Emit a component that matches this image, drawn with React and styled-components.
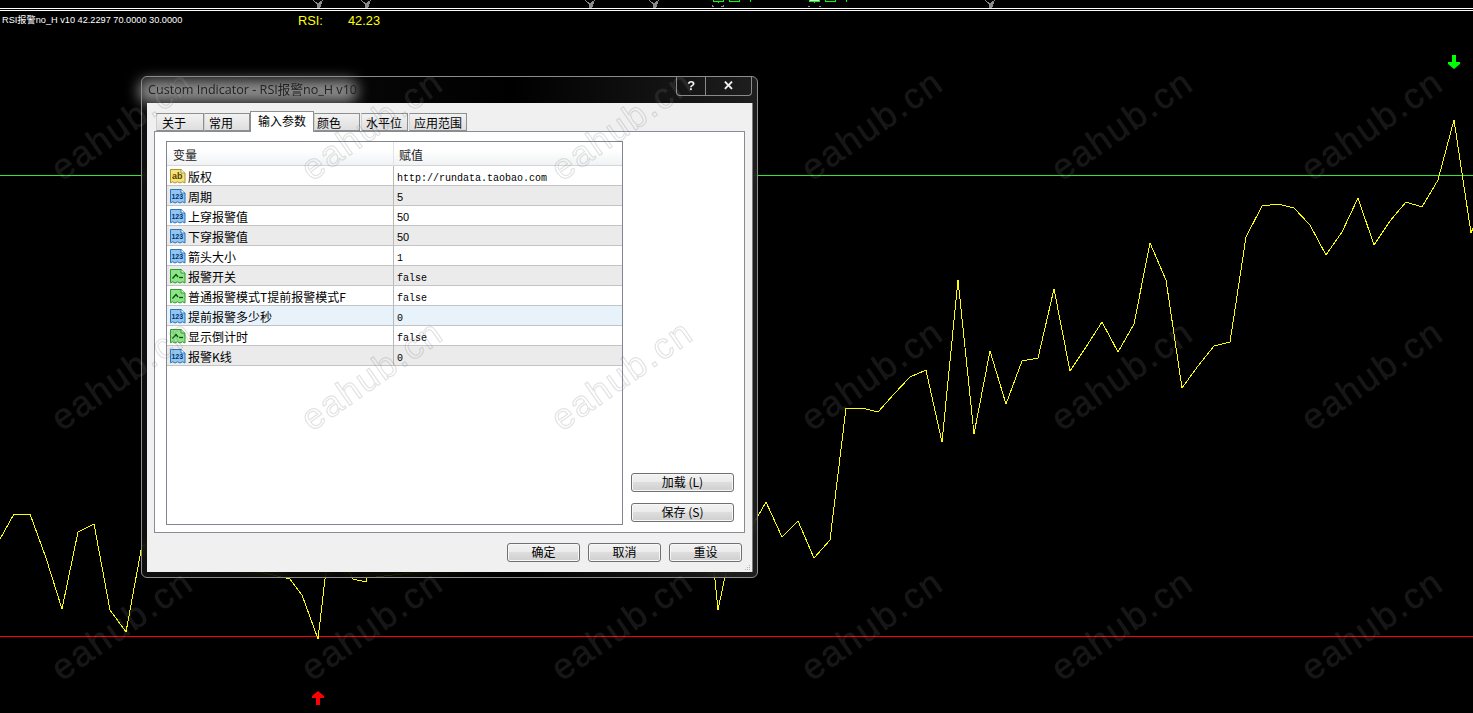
import React from 'react';
import styled, {createGlobalStyle} from 'styled-components';

const GlobalStyle = createGlobalStyle`
    html, body {
        margin: 0;
        padding: 0;
        background: #000;
        overflow: hidden;
    }
`;

const cjk = `"Noto Sans CJK SC", "Liberation Sans", sans-serif`;

const Page = styled.div`
    position: relative;
    width: 1473px;
    height: 713px;
    background: #000;
    overflow: hidden;
    font-family: ${cjk};
`;

const ChartSvg = styled.svg`
    position: absolute;
    left: 0;
    top: 0;
`;

const ChartHeader = styled.div`
    position: absolute;
    left: 2px;
    top: 14px;
    display: flex;
    align-items: center;
    height: 13px;
`;

const ChartLabel = styled.span`
    width: 296px;
    color: #fff;
    font: 9.2px/13px "Liberation Sans", ${cjk};
`;

const RsiName = styled.span`
    width: 50px;
    color: #ffff00;
    font: 12.8px/13px "Liberation Sans", sans-serif;
`;

const RsiValue = styled.span`
    color: #ffff00;
    font: 12.8px/13px "Liberation Sans", sans-serif;
`;

// aero 窗口，玻璃边框会把后面的线条模糊
const Dialog = styled.div`
    position: absolute;
    left: 141px;
    top: 76px;
    width: 617px;
    height: 502px;
    box-sizing: border-box;
    border: 1px solid #8c8c8c;
    border-radius: 6px;
    background: linear-gradient(90deg, rgba(20,20,20,.75), rgba(0,0,0,.75) 60%, rgba(40,40,40,.75));
    backdrop-filter: blur(4px);
    display: flex;
    flex-direction: column;
    padding: 0 4px 5px 5px;
`;

const TitleBar = styled.div`
    position: relative;
    height: 26px;
    flex: none;
    display: flex;
    align-items: center;
    justify-content: space-between;
`;

const TitleGlow = styled.div`
    position: absolute;
    left: -8px;
    top: 3px;
    width: 218px;
    height: 22px;
    background: #8e8e8e;
    filter: blur(7px);
    border-radius: 8px;
`;

const TitleText = styled.div`
    position: relative;
    margin: -1px 0 0 1px;
    color: #222;
    font: 12.6px/16px "Open Sans", ${cjk};
    white-space: nowrap;
`;

const CaptionButtons = styled.div`
    align-self: flex-start;
    display: flex;
    width: 76px;
    height: 19px;
    margin-right: 1px;
    box-sizing: border-box;
    border: 1px solid #8a8a8a;
    border-top: none;
    border-radius: 0 0 4px 4px;
`;

const CaptionButton = styled.div`
    width: ${props => props.wide ? '47px' : '29px'};
    box-sizing: border-box;
    text-align: center;
    color: #f0f0f0;
    font: bold 13px/17px "Liberation Sans", sans-serif;
    border-left: ${props => props.wide ? '1px solid #8a8a8a' : 'none'};
`;

const Client = styled.div`
    flex: 1;
    background: #f0f0f0;
    border-right: 1px solid #7a7a7a;
    display: flex;
    flex-direction: column;
    padding: 8px 7px 0 7px;
    position: relative;
`;

const TabStrip = styled.div`
    height: 20px;
    display: flex;
    align-items: flex-end;
    padding-left: 2px;
    position: relative;
    z-index: 1;
`;

const Tab = styled.div`
    box-sizing: border-box;
    width: ${props => props.w}px;
    height: ${props => props.active ? 21 : 18}px;
    margin-bottom: ${props => props.active ? -1 : 0}px;
    margin-right: ${props => props.gap || 0}px;
    padding-left: ${props => props.pad}px;
    border: 1px solid #8e8f8f;
    border-bottom: ${props => props.active ? 'none' : '1px solid #8e8f8f'};
    border-left-color: ${props => props.active ? '#8e8f8f' : '#d0d0d0'};
    background: ${props => props.active ? '#fff' : 'linear-gradient(#f2f2f2, #dedede)'};
    color: #000;
    font-size: 12px;
    line-height: ${props => props.active ? 18 : 17}px;
    white-space: nowrap;
`;

const TabPanel = styled.div`
    height: 402px;
    box-sizing: border-box;
    border: 1px solid #898c95;
    background: #fff;
    display: flex;
    gap: 8px;
    padding: 9px 0 0 11px;
`;

const ParamTable = styled.div`
    width: 457px;
    height: 384px;
    box-sizing: border-box;
    border: 1px solid #82878f;
    background: #fff;
    flex: none;
`;

const TableHeader = styled.div`
    height: 24px;
    box-sizing: border-box;
    display: grid;
    grid-template-columns: 227px 1fr;
    background: linear-gradient(#fff 35%, #f0f2f4);
    border-bottom: 1px solid #d5d5d5;
    font-size: 12px;
    line-height: 26px;
    color: #222;
`;

const HeaderCell = styled.div`
    padding-left: ${props => props.first ? 6 : 5}px;
    border-right: ${props => props.first ? '1px solid #e2e3e5' : 'none'};
`;

const Row = styled.div`
    height: 20px;
    box-sizing: border-box;
    display: grid;
    grid-template-columns: 227px 1fr;
    grid-template-rows: 19px;
    background: ${props => props.selected ? '#e8f2fb' : props.odd ? '#ebebeb' : '#fff'};
    border-bottom: 1px solid #c4c4c4;
`;

const NameCell = styled.div`
    box-sizing: border-box;
    display: flex;
    align-items: center;
    gap: 2px;
    padding: 1px 0 0 2px;
    border-right: 1px solid #b9b9b9;
    font-size: 12px;
    line-height: 17px;
    color: #000;
    white-space: nowrap;
`;

const ValueCell = styled.div`
    box-sizing: border-box;
    padding: ${props => props.mono ? 3 : 2}px 0 0 3px;
    color: #000;
    font: ${props => props.mono ? '10px/19px "Liberation Mono", monospace' : '11px/18px "Liberation Sans", sans-serif'};
`;

const IconSvg = styled.svg`
    flex: none;
`;

const SideButtons = styled.div`
    width: 103px;
    height: 381px;
    display: flex;
    flex-direction: column;
    justify-content: flex-end;
    gap: 11px;
`;

const Button = styled.div`
    box-sizing: border-box;
    width: ${props => props.w}px;
    height: 19px;
    flex: none;
    border: 1px solid #707070;
    border-radius: 3px;
    background: linear-gradient(#f2f2f2 0, #ebebeb 48%, #dddddd 50%, #cfcfcf 100%);
    box-shadow: inset 0 0 0 1px #f8f8f8;
    text-align: center;
    color: #000;
    font-size: 12px;
    line-height: 15px;
`;

const Footer = styled.div`
    display: flex;
    justify-content: flex-end;
    gap: 8px;
    padding: 10px 3px 0 0;
`;

const Grip = styled.svg`
    position: absolute;
    right: 1px;
    bottom: 1px;
`;

// 水印盖在最上面，白底上只看得到描边
const WatermarkLayer = styled.div`
    position: absolute;
    left: -3px;
    top: 0;
    display: grid;
    grid-template-columns: repeat(6, 250px);
    grid-auto-rows: 250px;
    pointer-events: none;
`;

const Watermark = styled.div`
    display: flex;
    align-items: center;
    justify-content: center;
    transform: rotate(-35deg);
    color: rgba(255, 255, 255, 0.085);
    -webkit-text-stroke: 1.2px rgba(60, 60, 60, 0.15);
    font: 36px/1 "Liberation Sans", sans-serif;
    letter-spacing: 2px;
    white-space: nowrap;
`;

const linePoints = [
    [0,539],[14,514],[30,514],[46,558],[62,609],[78,532],[94,524],[110,610],[126,632],[142,545],
    [290,579],[302,595],[318,639],[325,579],[332,540],
    [353,579],[366,582],[367,578],
    [700,540],[714,570],[718,610],[726,572],[740,540],
    [750,530],[766,502],[782,537],[798,521],[814,558],[830,540],[846,408],[862,408],[878,412],
    [894,394],[910,377],[926,370],[942,442],[958,280],[974,434],[990,351],[1006,404],[1022,361],
    [1038,358],[1054,289],[1070,371],[1086,347],[1102,322],[1118,352],[1134,324],[1150,243],
    [1166,280],[1182,388],[1198,366],[1214,346],[1230,342],[1246,237],[1262,206],[1278,204],
    [1294,208],[1310,225],[1326,255],[1342,232],[1358,198],[1374,245],[1390,221],[1406,202],
    [1422,207],[1438,180],[1454,120],[1471,233],[1473,228],
];

const grayArrows = [318, 366, 590, 654, 990];

function GrayArrow({x}) {
    return <path d={`M${x - 5} 0 L${x} 3 L${x + 5} 0 L${x + 3} 6 L${x + 1} 8 L${x - 1} 8 L${x - 1} 5 Z`} fill="#8a8a8a"/>;
}

function Chart() {
    return <ChartSvg width="1473" height="713" shapeRendering="crispEdges">
        <rect x="0" y="8" width="1473" height="1" fill="#fff"/>
        <rect x="0" y="10" width="1473" height="1" fill="#fff"/>
        <rect x="0" y="175" width="1473" height="1" fill="#32e632"/>
        <rect x="0" y="636" width="1473" height="1" fill="#ff0000"/>
        <polyline points={linePoints.map(p => p.join(',')).join(' ')} fill="none" stroke="#ffff00" strokeWidth="1"/>
        {grayArrows.map(x => <GrayArrow key={x} x={x}/>)}
        <rect x="809" y="0" width="11" height="2" fill="#fff"/>
        <g fill="none" stroke="#00ff00">
            <path d="M713.5 0 V1.5 H723.5 V0 M718.5 1.5 V3"/>
            <path d="M729.5 0 V1.5 H739.5 V0"/>
            <path d="M809.5 0 V1.5 H819.5 V0 M814.5 1.5 V3"/>
            <path d="M825.5 0 V1.5 H835.5 V0"/>
            <path d="M750.5 0 V1.5 M846.5 0 V2"/>
        </g>
        <path d="M712 5 L715 7 L712 7 Z M724 5 L720 7 L724 7 Z M808 6 H810 V7 H808 Z M819 6 H821 V7 H819 Z" fill="#8a8a8a"/>
        <path d="M1452 55 H1456 V62 H1460 V64 L1454 69 L1448 64 V62 H1452 Z" fill="#00ff00" shapeRendering="auto"/>
        <path d="M316 705 H320 V698 H324 V696 L318 691 L312 696 V698 H316 Z" fill="#ff0000" shapeRendering="auto"/>
    </ChartSvg>;
}

const iconColors = {
    ab: {fill: '#f8e27a', edge: '#a8962e', ink: '#4f4200', text: 'ab'},
    num: {fill: '#8fc6f2', edge: '#2f74b8', ink: '#06306e', text: '123'},
};

// 参数类型图标: ab / 123 / 开关
function TypeIcon({kind}) {
    const page = 'M1 1.5 H11.5 L15.5 5 V15 L13 13.8 L10.5 15 L8 13.8 L5.5 15 L3 13.8 L1 14.8 Z';
    if (kind === 'bool') {
        return <IconSvg width="17" height="16" viewBox="0 0 16 16">
            <path d={page} fill="#8fe48a" stroke="#2f9a2f"/>
            <path d="M11.5 1.5 V5 H15.5" fill="#e4fbe0" stroke="#2f9a2f"/>
            <path d="M3 10.5 L6.5 6.5 L8.5 9" fill="none" stroke="#064f06" strokeWidth="1.3"/>
            <path d="M9.5 9.5 H13.5" stroke="#064f06" strokeWidth="1.3"/>
        </IconSvg>;
    }
    const c = iconColors[kind];
    return <IconSvg width="17" height="16" viewBox="0 0 16 16">
        <path d={page} fill={c.fill} stroke={c.edge}/>
        <path d="M11.5 1.5 V5 H15.5" fill="#fff" stroke={c.edge}/>
        <text x="7.8" y="11" textAnchor="middle" fontSize={kind === 'ab' ? 9 : 7} fontWeight="bold" fontFamily="Liberation Sans, sans-serif" fill={c.ink}>{c.text}</text>
    </IconSvg>;
}

const params = [
    {name: '版权', value: 'http://rundata.taobao.com', kind: 'ab', mono: true},
    {name: '周期', value: '5', kind: 'num'},
    {name: '上穿报警值', value: '50', kind: 'num'},
    {name: '下穿报警值', value: '50', kind: 'num'},
    {name: '箭头大小', value: '1', kind: 'num', mono: true},
    {name: '报警开关', value: 'false', kind: 'bool', mono: true},
    {name: '普通报警模式T提前报警模式F', value: 'false', kind: 'bool', mono: true},
    {name: '提前报警多少秒', value: '0', kind: 'num', mono: true, selected: true},
    {name: '显示倒计时', value: 'false', kind: 'bool', mono: true},
    {name: '报警K线', value: '0', kind: 'num', mono: true},
];

const tabs = [
    {label: '关于', w: 48, pad: 5},
    {label: '常用', w: 46, pad: 4},
    {label: '输入参数', w: 64, pad: 7, active: true},
    {label: '颜色', w: 46, pad: 2, gap: 1},
    {label: '水平位', w: 47, pad: 4, gap: 1},
    {label: '应用范围', w: 58, pad: 4},
];

export default function App() {
    return <Page>
        <GlobalStyle/>
        <Chart/>
        <ChartHeader>
            <ChartLabel>RSI报警no_H v10 42.2297 70.0000 30.0000</ChartLabel>
            <RsiName>RSI:</RsiName>
            <RsiValue>42.23</RsiValue>
        </ChartHeader>
        <Dialog>
            <TitleBar>
                <TitleGlow/>
                <TitleText>Custom Indicator - RSI报警no_H v10</TitleText>
                <CaptionButtons>
                    <CaptionButton>?</CaptionButton>
                    <CaptionButton wide>✕</CaptionButton>
                </CaptionButtons>
            </TitleBar>
            <Client>
                <TabStrip>
                    {tabs.map(tab => <Tab key={tab.label} w={tab.w} pad={tab.pad} active={tab.active} gap={tab.gap}>{tab.label}</Tab>)}
                </TabStrip>
                <TabPanel>
                    <ParamTable>
                        <TableHeader>
                            <HeaderCell first>变量</HeaderCell>
                            <HeaderCell>赋值</HeaderCell>
                        </TableHeader>
                        {params.map((param, i) =>
                            <Row key={param.name} odd={i % 2 === 1} selected={param.selected}>
                                <NameCell><TypeIcon kind={param.kind}/>{param.name}</NameCell>
                                <ValueCell mono={param.mono}>{param.value}</ValueCell>
                            </Row>
                        )}
                    </ParamTable>
                    <SideButtons>
                        <Button w={103}>加载 (L)</Button>
                        <Button w={103}>保存 (S)</Button>
                    </SideButtons>
                </TabPanel>
                <Footer>
                    <Button w={73}>确定</Button>
                    <Button w={73}>取消</Button>
                    <Button w={73}>重设</Button>
                </Footer>
                <Grip width="7" height="7" fill="#b5b5b5">
                    <rect x="5" y="1" width="1" height="1"/>
                    <rect x="3" y="3" width="1" height="1"/>
                    <rect x="5" y="3" width="1" height="1"/>
                    <rect x="1" y="5" width="1" height="1"/>
                    <rect x="3" y="5" width="1" height="1"/>
                    <rect x="5" y="5" width="1" height="1"/>
                </Grip>
            </Client>
        </Dialog>
        <WatermarkLayer>
            {Array.from({length: 18}).map((_, i) => <Watermark key={i}>eahub.cn</Watermark>)}
        </WatermarkLayer>
    </Page>;
}
